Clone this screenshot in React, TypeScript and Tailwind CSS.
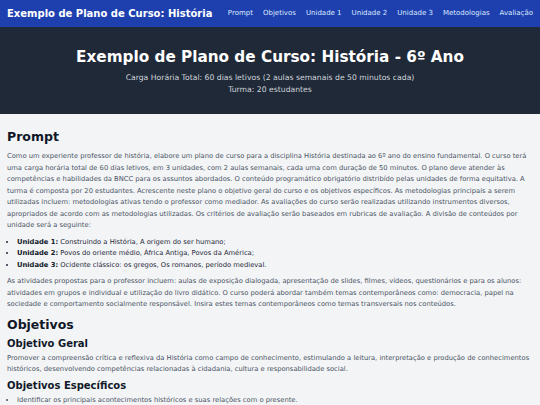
export default function App() {
  const links = ["Prompt", "Objetivos", "Unidade 1", "Unidade 2", "Unidade 3", "Metodologias", "Avaliação"];

  return (
    <div className="min-h-screen bg-gray-100 font-['DejaVu_Sans',sans-serif] text-gray-800">
      {/* top nav */}
      <nav className="flex h-[27px] items-center justify-between bg-[#1e40af] px-[7px]">
        <h1 className="text-[10px] font-bold text-white">Exemplo de Plano de Curso: História</h1>
        <ul className="flex gap-[10px] text-[7px] text-blue-100">
          {links.map((l) => (
            <li key={l}>{l}</li>
          ))}
        </ul>
      </nav>

      {/* hero */}
      <header className="flex h-[87px] flex-col items-center justify-center bg-[#1f2937] pt-[2px] text-center">
        <h2 className="text-[15.25px] font-bold leading-[20px] text-white">Exemplo de Plano de Curso: História - 6º Ano</h2>
        <p className="mt-[5px] text-[7.7px] leading-[12px] text-gray-300">
          Carga Horária Total: 60 dias letivos (2 aulas semanais de 50 minutos cada)
        </p>
        <p className="text-[7.7px] leading-[12px] text-gray-300">Turma: 20 estudantes</p>
      </header>

      <main className="px-[7px] pt-[14px] text-[6.75px] leading-[11.5px] text-gray-600">
        <section>
          <h2 className="mb-[5px] text-[12.5px] font-bold leading-[18px] text-gray-900">Prompt</h2>
          <p>
            Como um experiente professor de história, elabore um plano de curso para a disciplina História destinada ao 6º ano do ensino fundamental. O curso terá uma carga horária total de 60 dias letivos, em 3 unidades, com 2 aulas semanais, cada uma com duração de 50 minutos. O plano deve atender às competências e habilidades da BNCC para os assuntos abordados. O conteúdo programático obrigatório distribído pelas unidades de forma equitativa. A turma é composta por 20 estudantes. Acrescente neste plano o objetivo geral do curso e os objetivos específicos. As metodologias principais a serem utilizadas incluem: metodologias ativas tendo o professor como mediador. As avaliações do curso serão realizadas utilizando instrumentos diversos, apropriados de acordo com as metodologias utilizadas. Os critérios de avaliação serão baseados em rubricas de avaliação. A divisão de conteúdos por unidade será a seguinte:
          </p>
          <ul className="my-[5px] list-disc pl-[10px] text-gray-800">
            <li>
              <b className="text-gray-900">Unidade 1:</b> Construindo a História, A origem do ser humano;
            </li>
            <li>
              <b className="text-gray-900">Unidade 2:</b> Povos do oriente médio, África Antiga, Povos da América;
            </li>
            <li>
              <b className="text-gray-900">Unidade 3:</b> Ocidente clássico: os gregos, Os romanos, período medieval.
            </li>
          </ul>
          <p>
            As atividades propostas para o professor incluem: aulas de exposição dialogada, apresentação de slides, filmes, vídeos, questionários e para os alunos: atividades em grupos e individual e utilização do livro didático. O curso poderá abordar também temas contemporâneos como: democracia, papel na sociedade e comportamento socialmente responsável. Insira estes temas contemporâneos como temas transversais nos conteúdos.
          </p>
        </section>

        <section className="mt-[5px]">
          <h2 className="mb-[3px] text-[12.5px] font-bold leading-[18px] text-gray-900">Objetivos</h2>
          <h3 className="text-[10px] font-bold leading-[14px] text-gray-900">Objetivo Geral</h3>
          <p className="mt-[2px]">
            Promover a compreensão crítica e reflexiva da História como campo de conhecimento, estimulando a leitura, interpretação e produção de conhecimentos históricos, desenvolvendo competências relacionadas à cidadania, cultura e responsabilidade social.
          </p>
          <h3 className="mt-[3px] text-[10px] font-bold leading-[14px] text-gray-900">Objetivos Específicos</h3>
          <ul className="mt-[2px] list-disc pl-[10px]">
            <li>Identificar os principais acontecimentos históricos e suas relações com o presente.</li>
          </ul>
        </section>
      </main>
    </div>
  );
}
